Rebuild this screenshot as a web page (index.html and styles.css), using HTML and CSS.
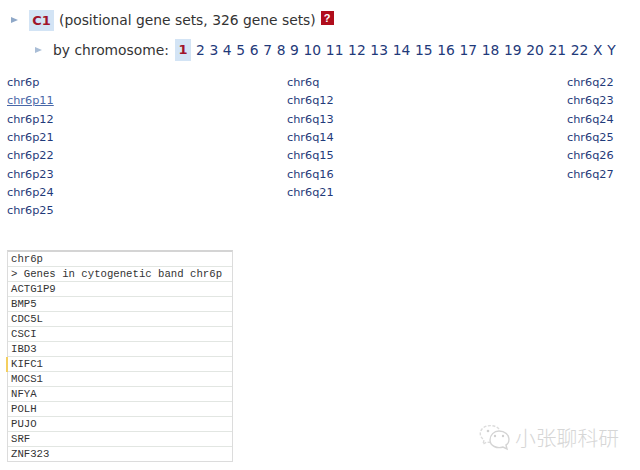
FILE: index.html
```html
<!DOCTYPE html>
<html lang="en">
<head>
<meta charset="utf-8">
<title>C1 positional gene sets</title>
<link rel="stylesheet" href="styles.css">
</head>
<body>
<div class="head-row">
  <span class="arrow"></span>
  <span class="tag tag-c1">C1</span>
  <span class="head-text">(positional gene sets, 326 gene sets)</span>
  <span class="help">?</span>
</div>
<div class="chrom-row">
  <span class="arrow arrow-small"></span>
  <span class="chrom-label">by chromosome:</span>
  <span class="tag tag-num">1</span>
  <a>2</a><a>3</a><a>4</a><a>5</a><a>6</a><a>7</a><a>8</a><a>9</a><a>10</a><a>11</a><a>12</a><a>13</a><a>14</a><a>15</a><a>16</a><a>17</a><a>18</a><a>19</a><a>20</a><a>21</a><a>22</a><a>X</a><a>Y</a>
</div>
<div class="bands">
  <ul>
    <li>chr6p</li><li class="hover">chr6p11</li><li>chr6p12</li><li>chr6p21</li><li>chr6p22</li><li>chr6p23</li><li>chr6p24</li><li>chr6p25</li>
  </ul>
  <ul>
    <li>chr6q</li><li>chr6q12</li><li>chr6q13</li><li>chr6q14</li><li>chr6q15</li><li>chr6q16</li><li>chr6q21</li>
  </ul>
  <ul>
    <li>chr6q22</li><li>chr6q23</li><li>chr6q24</li><li>chr6q25</li><li>chr6q26</li><li>chr6q27</li>
  </ul>
</div>
<div class="sheet">
  <div class="cell">chr6p</div>
  <div class="cell">&gt; Genes in cytogenetic band chr6p</div>
  <div class="cell">ACTG1P9</div>
  <div class="cell">BMP5</div>
  <div class="cell">CDC5L</div>
  <div class="cell">CSCI</div>
  <div class="cell">IBD3</div>
  <div class="cell mark">KIFC1</div>
  <div class="cell">MOCS1</div>
  <div class="cell">NFYA</div>
  <div class="cell">POLH</div>
  <div class="cell">PUJO</div>
  <div class="cell">SRF</div>
  <div class="cell">ZNF323</div>
</div>
<div class="watermark">
  <svg class="wm-icon" viewBox="0 0 34 28" width="34" height="28" aria-hidden="true">
    <path d="M21 6C18 2 8 1 4 6c-3 4-2 8 2 11l-1 4 4-2c2 .6 3 .6 5 .5" fill="none" stroke="#dcdcdc" stroke-width="1.4" stroke-dasharray="3 1.5"/>
    <path d="M21 8c6 0 10 4 10 8 0 3-1 5-3 6l1 4-4-2c-6 2-13-1-13-7 0-5 4-9 9-9z" fill="none" stroke="#d4d4d4" stroke-width="1.4"/>
    <circle cx="10" cy="8" r="1.3" fill="#d0d0d0"/><circle cx="17" cy="13" r="1.2" fill="#d0d0d0"/><circle cx="25" cy="13" r="1.2" fill="#d0d0d0"/>
  </svg>
  <span class="wm-text">小张聊科研</span>
</div>
</body>
</html>
```
FILE: styles.css
```css
html, body { margin: 0; padding: 0; }
body {
  position: relative;
  width: 640px;
  height: 470px;
  overflow: hidden;
  background: #fff;
  font-family: "DejaVu Sans", Verdana, sans-serif;
  font-size: 11.3px;
  color: #333;
}
.head-row {
  display: flex;
  align-items: center;
  height: 24px;
  margin-top: 8px;
  padding-left: 11px;
  font-size: 13.85px;
}
.arrow {
  width: 0; height: 0;
  border-left: 7px solid #8fa8c8;
  border-top: 3.5px solid transparent;
  border-bottom: 3.5px solid transparent;
}
.tag {
  background: #d3e4f5;
  color: #a0142a;
  font-weight: 700;
  text-align: center;
}
.tag-c1 { width: 25px; line-height: 21px; margin-left: 11px; font-size: 13px; }
.head-text { margin-left: 5px; }
.help {
  width: 13px; height: 14px;
  margin: -5px 0 0 5px;
  background: #b00d1c;
  color: #fff;
  font: 700 11px/14px "Liberation Sans", sans-serif;
  text-align: center;
}
.chrom-row {
  display: flex;
  align-items: center;
  height: 24px;
  margin-top: 6px;
  padding-left: 35px;
  font-size: 13.85px;
  color: #1f3a7a;
}
.arrow-small { border-left-color: #a9bdd6; }
.chrom-label { margin-left: 11px; margin-right: 6px; color: #333; }
.tag-num { width: 16px; line-height: 22px; font-size: 13px; margin-right: 5px; }
.chrom-row a { margin-right: 4.65px; }
.bands {
  display: grid;
  grid-template-columns: 280px 280px 1fr;
  margin-top: 12px;
  padding-left: 7px;
}
.bands ul { list-style: none; margin: 0; padding: 0; }
.bands li { height: 18.35px; line-height: 18px; color: #1f3a7a; }
.bands .hover { color: #4a68a8; text-decoration: underline; }
.sheet {
  width: 224px;
  margin: 29px 0 0 7px;
  border: 1px solid #dcdcdc;
  border-top: 2px solid #d4d4d4;
  font-family: "Liberation Mono", monospace;
  font-size: 10.67px;
  color: #333;
}
.cell {
  position: relative;
  height: 14px;
  line-height: 14px;
  padding-left: 3px;
  border-bottom: 1px solid #e2e6e2;
  white-space: pre;
}
.cell:last-child { border-bottom: 0; }
.mark::before {
  content: "";
  position: absolute;
  left: -2px; top: 0;
  width: 2px; height: 15px;
  background: #f4cf5f;
}
.watermark {
  position: absolute;
  left: 478px;
  top: 423px;
  display: flex;
  align-items: center;
  gap: 3px;
}
.wm-text {
  font-family: "Noto Sans CJK SC", sans-serif;
  font-size: 20.8px;
  font-weight: 300;
  color: #d6d6d6;
  line-height: 28px;
  white-space: nowrap;
}
```
